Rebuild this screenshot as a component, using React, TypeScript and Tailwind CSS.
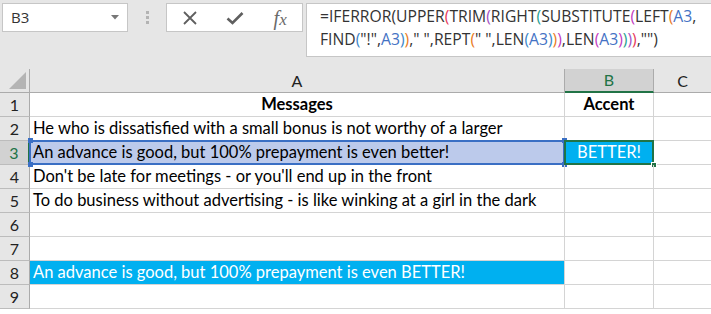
import React from "react";

const cellFont = { fontFamily: "Lato, 'Liberation Sans', sans-serif" };

const RED = "text-[#e8385a]";
const PURPLE = "text-[#a451c4]";
const TEAL = "text-[#1f9e8f]";
const MAGENTA = "text-[#c23bbf]";
const ORANGE = "text-[#e87a1c]";
const BLUE = "text-[#4472c4]";
const FIND_BLUE = "text-[#3b86c8]";

const rows: { n: number; a: string; b?: string }[] = [
  { n: 1, a: "Messages", b: "Accent" },
  { n: 2, a: "He who is dissatisfied with a small bonus is not worthy of a larger" },
  { n: 3, a: "An advance is good, but 100% prepayment is even better!", b: "BETTER!" },
  { n: 4, a: "Don't be late for meetings - or you'll end up in the front" },
  { n: 5, a: "To do business without advertising - is like winking at a girl in the dark" },
  { n: 6, a: "" },
  { n: 7, a: "" },
  { n: 8, a: "An advance is good, but 100% prepayment is even BETTER!" },
  { n: 9, a: "" },
];

const Corner = ({ className }: { className: string }) => (
  <div className={"absolute w-[5px] h-[5px] bg-[#3a6fc4] " + className} />
);

const FormulaBar = () => (
  <div className="flex items-start bg-[#e6e6e6] h-[69px] pt-[3px]">
    <div className="ml-[2px] w-[126px] h-[29px] bg-white border border-[#c6c6c6] flex items-center justify-between pl-[8px] pr-[8px]">
      <span className="text-[15px] text-[#333]" style={{ fontFamily: "'Open Sans', sans-serif" }}>
        B3
      </span>
      <svg width="8" height="5" viewBox="0 0 8 5">
        <path d="M0 0h8L4 4.5z" fill="#777" />
      </svg>
    </div>
    <div className="w-[38px] h-[29px] flex flex-col items-center justify-center gap-[2px]">
      <div className="w-[3px] h-[3px] bg-[#b3b3b3]" />
      <div className="w-[3px] h-[3px] bg-[#b3b3b3]" />
      <div className="w-[3px] h-[3px] bg-[#b3b3b3]" />
    </div>
    <div className="w-[137px] h-[29px] bg-white border border-[#c6c6c6] flex items-center">
      <div className="w-[46px] flex justify-center">
        <svg width="16" height="16" viewBox="0 0 16 16">
          <path d="M2 2L14 14M14 2L2 14" stroke="#5f5f5f" strokeWidth="1.8" />
        </svg>
      </div>
      <div className="w-[46px] flex justify-center">
        <svg width="18" height="16" viewBox="0 0 18 16">
          <path d="M1.5 8.5L6.5 13L16.5 3" stroke="#5f5f5f" strokeWidth="2.6" fill="none" />
        </svg>
      </div>
      <div className="w-[44px] flex justify-center">
        <span
          className="text-[20px] italic text-[#6a6a6a]"
          style={{ fontFamily: "'Liberation Serif', serif" }}
        >
          f<span className="text-[17px]">x</span>
        </span>
      </div>
    </div>
    <div
      className="ml-[3px] flex-1 h-[54px] bg-white border border-[#c6c6c6] border-r-0 pl-[13px] pt-[1px] text-[15.7px] leading-[23px] text-[#333]"
      style={{ fontFamily: "'Open Sans', sans-serif" }}
    >
      <div>
        =IFERROR(UPPER<span className={RED}>(</span>TRIM<span className={PURPLE}>(</span>RIGHT
        <span className={TEAL}>(</span>SUBSTITUTE<span className={MAGENTA}>(</span>LEFT
        <span className={ORANGE}>(</span>
        <span className={BLUE}>A3</span>,
      </div>
      <div>
        FIND<span className={FIND_BLUE}>(</span>"!",<span className={BLUE}>A3</span>
        <span className={FIND_BLUE}>)</span>
        <span className={ORANGE}>)</span>," ",REPT<span className={ORANGE}>(</span>" ",LEN
        <span className={FIND_BLUE}>(</span>
        <span className={BLUE}>A3</span>
        <span className={FIND_BLUE}>)</span>
        <span className={ORANGE}>)</span>
        <span className={MAGENTA}>)</span>,LEN<span className={MAGENTA}>(</span>
        <span className={BLUE}>A3</span>
        <span className={MAGENTA}>)</span>
        <span className={TEAL}>)</span>
        <span className={PURPLE}>)</span>
        <span className={RED}>)</span>,"")
      </div>
    </div>
  </div>
);

const HeaderRow = () => (
  <div className="flex h-[24px] bg-[#e6e6e6] text-[16px]" style={cellFont}>
    <div className="w-[30px] border-r border-b border-[#ababab] flex items-end justify-end pr-[3px] pb-[3px]">
      <svg width="17" height="17" viewBox="0 0 17 17">
        <path d="M17 0V17H0z" fill="#b4b4b4" />
      </svg>
    </div>
    <div className="w-[535px] border-r border-b border-[#ababab] flex items-center justify-center text-[#222]">
      A
    </div>
    <div className="w-[89px] bg-[#d2d2d2] border-r border-[#ababab] border-b-2 border-b-[#217346] flex items-center justify-center text-[#217346]">
      B
    </div>
    <div className="flex-1 border-b border-[#ababab] flex items-center justify-center text-[#222]">C</div>
  </div>
);

const Row = ({ n, a, b }: { n: number; a: string; b?: string }) => {
  const sel = n === 3;
  const hl = n === 8;
  const bold = n === 1;
  return (
    <div className="flex h-[24px] text-[16.5px]" style={cellFont}>
      <div
        className={
          "w-[30px] flex items-center justify-center border-b border-[#bcbcbc] text-[16px] " +
          (sel
            ? "bg-[#d2d2d2] text-[#217346] border-r-2 border-r-[#217346]"
            : "bg-[#e6e6e6] text-[#222] border-r border-r-[#ababab]")
        }
      >
        {n}
      </div>
      <div
        className={
          "relative w-[535px] border-r border-b border-[#d4d4d4] flex items-center whitespace-nowrap " +
          (bold ? "justify-center font-bold text-black " : "pl-[3px] ") +
          (sel ? "bg-[#bccaeb] text-[#111] " : "") +
          (hl ? "bg-[#00b0f0] text-white " : "text-black ")
        }
      >
        {a}
        {sel && (
          <>
            <div className="absolute -top-[1px] -left-[1px] -right-[1px] -bottom-[1px] border-2 border-[#3a6fc4] pointer-events-none" />
            <Corner className="-top-[3px] -left-[2px]" />
            <Corner className="-bottom-[3px] -left-[2px]" />
            <Corner className="-top-[3px] -right-[3px]" />
            <Corner className="-bottom-[3px] -right-[3px]" />
          </>
        )}
      </div>
      <div
        className={
          "relative w-[89px] border-r border-b border-[#d4d4d4] flex items-center justify-center whitespace-nowrap " +
          (bold ? "font-bold text-black " : "") +
          (sel ? "bg-[#00b0f0] text-white" : "text-black")
        }
      >
        {b}
        {sel && (
          <>
            <div className="absolute -top-[1px] -left-[1px] -right-[1px] -bottom-[1px] border-2 border-[#217346] pointer-events-none" />
            <div className="absolute -bottom-[4px] -right-[4px] w-[6px] h-[6px] bg-[#217346] border border-white" />
          </>
        )}
      </div>
      <div className="flex-1 border-b border-[#d4d4d4]" />
    </div>
  );
};

export default function App() {
  return (
    <div className="w-[711px] h-[314px] overflow-hidden bg-white">
      <FormulaBar />
      <HeaderRow />
      {rows.map((r) => (
        <Row key={r.n} {...r} />
      ))}
    </div>
  );
}
